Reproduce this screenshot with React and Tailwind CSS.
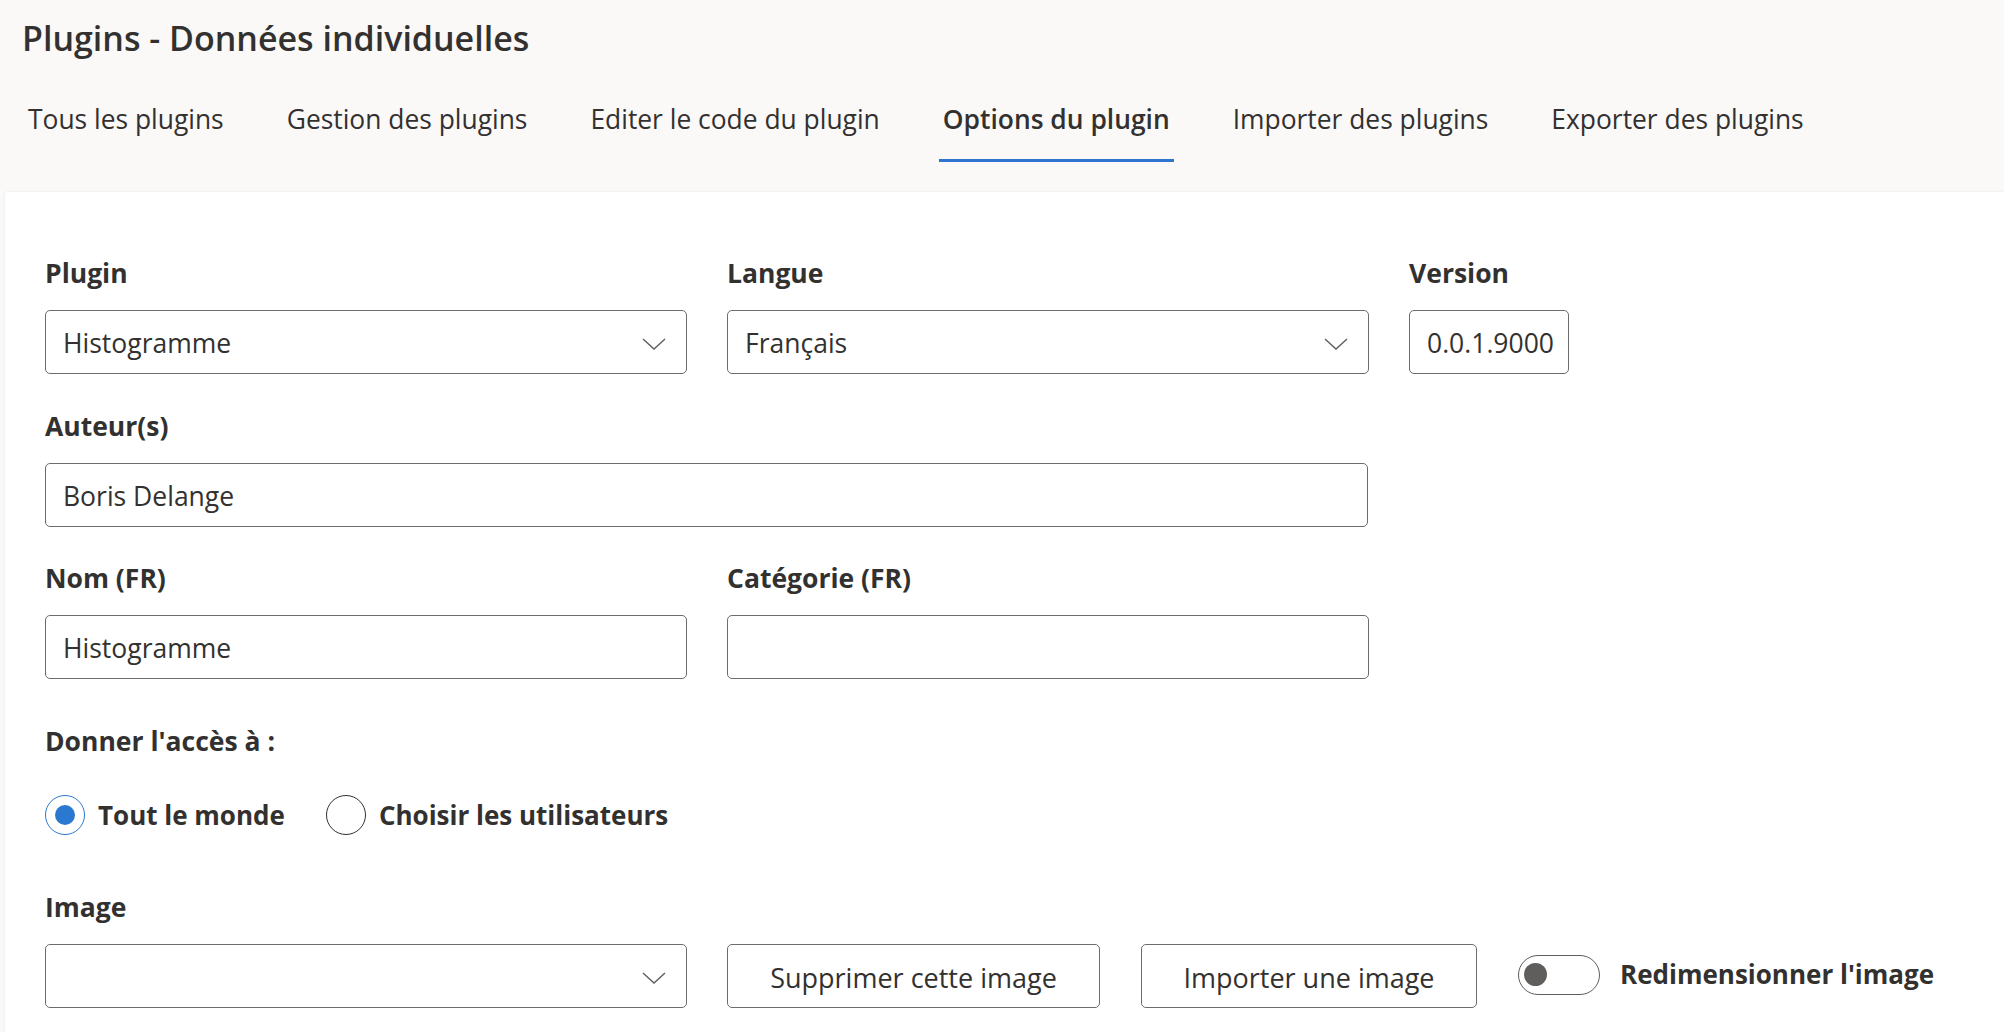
const TABS = [
  { label: 'Tous les plugins' },
  { label: 'Gestion des plugins' },
  { label: 'Editer le code du plugin' },
  { label: 'Options du plugin', active: true },
  { label: 'Importer des plugins' },
  { label: 'Exporter des plugins' },
]

function Chevron() {
  return (
    <svg width="24" height="12" viewBox="0 0 24 12" fill="none" className="shrink-0">
      <path d="M1 1 L12 11 L23 1" stroke="#605e5c" strokeWidth="1.4" />
    </svg>
  )
}

function Label({ children }) {
  return <div className="text-[26.5px] leading-[36px] font-bold">{children}</div>
}

function Box({ children, dropdown, className = '' }) {
  return (
    <div
      className={`h-[64px] flex items-center justify-between border border-[#6e6c6a] rounded-[5px] bg-white pl-[17px] pr-[20px] pt-[3px] text-[26.5px] ${className}`}
    >
      <span className="whitespace-nowrap">{children}</span>
      {dropdown && <Chevron />}
    </div>
  )
}

function Field({ label, value, dropdown, width, boxClass = '' }) {
  return (
    <div className={`flex flex-col gap-[19px] ${width}`}>
      <Label>{label}</Label>
      <Box dropdown={dropdown} className={boxClass}>{value}</Box>
    </div>
  )
}

function Radio({ checked, label }) {
  return (
    <div className="flex items-center gap-[13px] h-[40px]">
      <div
        className={`w-[40px] h-[40px] rounded-full flex items-center justify-center border-[1.5px] ${
          checked ? 'border-[#2b78d0]' : 'border-[#323130]'
        }`}
      >
        {checked && <div className="w-[20px] h-[20px] rounded-full bg-[#2b78d0]" />}
      </div>
      <span className="text-[26px] font-bold whitespace-nowrap">{label}</span>
    </div>
  )
}

export default function App() {
  return (
    <div className="w-[2004px] h-[1032px] overflow-hidden flex flex-col bg-[#faf9f8] text-[#323130] font-['Open_Sans',sans-serif]">
      <header className="px-[22px] pt-[15px]">
        <h1 className="text-[34px] leading-[46px] font-semibold">Plugins - Données individuelles</h1>
        <nav className="flex gap-[55px] mt-[17px] ml-[2px]">
          {TABS.map((t) => (
            <div key={t.label} className="flex flex-col h-[84px] pt-[3px]">
              <div
                className={`flex-1 flex items-center px-[4px] text-[26.4px] whitespace-nowrap ${
                  t.active ? 'font-semibold' : 'font-normal'
                }`}
              >
                {t.label}
              </div>
              <div className={`h-[3px] ${t.active ? 'bg-[#2f74cf]' : 'bg-transparent'}`} />
            </div>
          ))}
        </nav>
      </header>

      <main className="flex-1 ml-[5px] mt-[30px] bg-white rounded-tl-[3px] shadow-[0_0_3px_rgba(0,0,0,0.08)] pl-[40px] pt-[63px] flex flex-col">
        <div className="flex gap-[40px]">
          <Field label="Plugin" value="Histogramme" dropdown width="w-[642px]" />
          <Field label="Langue" value="Français" dropdown width="w-[642px]" />
          <Field label="Version" value="0.0.1.9000" width="w-[160px]" />
        </div>

        <div className="flex mt-[34px]">
          <Field label="Auteur(s)" value="Boris Delange" width="w-[1323px]" />
        </div>

        <div className="flex gap-[40px] mt-[33px]">
          <Field label="Nom (FR)" value="Histogramme" width="w-[642px]" />
          <Field label="Catégorie (FR)" value="" width="w-[642px]" />
        </div>

        <div className="mt-[44px]">
          <Label>Donner l'accès à :</Label>
        </div>
        <div className="flex items-center gap-[41px] mt-[36px]">
          <Radio checked label="Tout le monde" />
          <Radio label="Choisir les utilisateurs" />
        </div>

        <div className="mt-[54px]">
          <Label>Image</Label>
        </div>
        <div className="flex items-center mt-[19px]">
          <Box dropdown className="w-[642px]" />
          <button className="ml-[40px] w-[373px] h-[64px] pt-[4px] border border-[#6e6c6a] rounded-[5px] bg-white text-[27px]">
            Supprimer cette image
          </button>
          <button className="ml-[41px] w-[336px] h-[64px] pt-[4px] border border-[#6e6c6a] rounded-[5px] bg-white text-[27px]">
            Importer une image
          </button>
          <div className="ml-[41px] mb-[3px] w-[82px] h-[40px] rounded-full border-[1.5px] border-[#605e5c] flex items-center pl-[5px]">
            <div className="w-[23px] h-[23px] rounded-full bg-[#605e5c]" />
          </div>
          <span className="ml-[20px] mb-[3px] text-[26px] font-bold whitespace-nowrap">Redimensionner l'image</span>
        </div>
      </main>
    </div>
  )
}
